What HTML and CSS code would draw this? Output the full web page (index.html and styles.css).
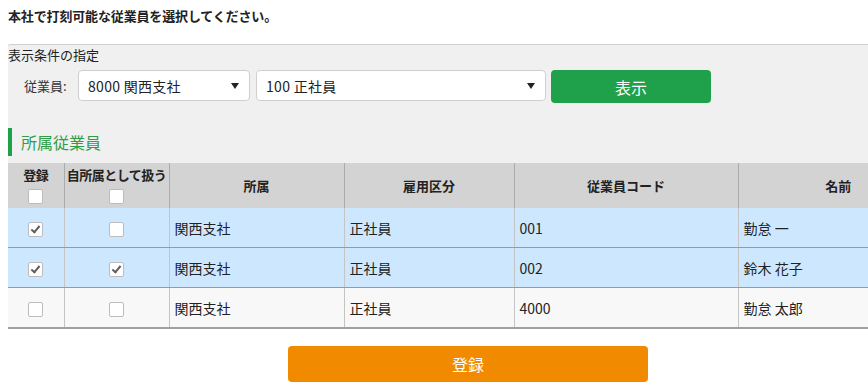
FILE: index.html
```html
<!DOCTYPE html>
<html lang="ja">
<head>
<meta charset="utf-8">
<link rel="stylesheet" href="styles.css">
</head>
<body>
<h1 class="page-title">本社で打刻可能な従業員を選択してください。</h1>
<div class="panel">
  <div class="panel-top">
    <div class="cond-title">表示条件の指定</div>
    <div class="filter-row">
      <span class="filter-label">従業員:</span>
      <div class="select select-office"><span>8000 関西支社</span><span class="arrow"></span></div>
      <div class="select select-type"><span>100 正社員</span><span class="arrow"></span></div>
      <button class="btn btn-show">表示</button>
    </div>
    <div class="section-title">所属従業員</div>
  </div>
  <table class="emp-table">
    <colgroup>
      <col class="c1"><col class="c2"><col class="c3"><col class="c4"><col class="c5"><col class="c6">
    </colgroup>
    <thead>
      <tr>
        <th class="th-check"><div>登録</div><span class="cb"></span></th>
        <th class="th-check"><div>自所属として扱う</div><span class="cb"></span></th>
        <th>所属</th>
        <th>雇用区分</th>
        <th>従業員コード</th>
        <th>名前</th>
      </tr>
    </thead>
    <tbody>
      <tr class="sel">
        <td class="center"><span class="cb checked"></span></td>
        <td class="center"><span class="cb"></span></td>
        <td>関西支社</td><td>正社員</td><td>001</td><td>勤怠 一</td>
      </tr>
      <tr class="sel">
        <td class="center"><span class="cb checked"></span></td>
        <td class="center"><span class="cb checked"></span></td>
        <td>関西支社</td><td>正社員</td><td>002</td><td>鈴木 花子</td>
      </tr>
      <tr class="plain last">
        <td class="center"><span class="cb"></span></td>
        <td class="center"><span class="cb"></span></td>
        <td>関西支社</td><td>正社員</td><td>4000</td><td>勤怠 太郎</td>
      </tr>
    </tbody>
  </table>
  <div class="submit-row">
    <button class="btn btn-submit">登録</button>
  </div>
</div>
</body>
</html>
```
FILE: styles.css
```css
html { overflow: hidden; }
body {
  margin: 8px 0 0 8px;
  font-family: "Noto Sans CJK JP", "Noto Sans", sans-serif;
  color: #222;
  background: #fff;
}
.page-title {
  margin: 0;
  font-size: 13px;
  line-height: 16px;
  font-weight: bold;
  letter-spacing: -0.15px;
}
.panel {
  margin: 20px 0 0 -1px;
  width: 860px;
  height: 346px;
  overflow: hidden;
  border-top: 1px solid #d0d0d0;
  border-left: 1px solid #d0d0d0;
  border-top-left-radius: 4px;
}
.panel-top {
  width: 930px;
  background: #f0f0f0;
  border-top-left-radius: 4px;
  padding-bottom: 7px;
}
.cond-title {
  font-size: 13px;
  line-height: 20px;
}
.filter-row {
  display: flex;
  align-items: flex-start;
  margin-top: 5px;
  padding-left: 16px;
}
.filter-label {
  font-size: 13px;
  color: #333;
  line-height: 31px;
  width: 54px;
}
.select {
  display: flex;
  align-items: center;
  justify-content: space-between;
  box-sizing: border-box;
  height: 31px;
  background: #fff;
  border: 1px solid #cfcfcf;
  border-radius: 4px;
  padding: 0 10px 0 9px;
  font-size: 14px;
  letter-spacing: 0.3px;
  color: #222;
}
.select-office { width: 172px; }
.select-type { width: 290px; margin-left: 6px; }
.arrow {
  width: 0; height: 0;
  border-left: 4px solid transparent;
  border-right: 4px solid transparent;
  border-top: 6px solid #222;
}
.btn {
  border: none;
  color: #fff;
  font-family: inherit;
  cursor: pointer;
}
.btn-show {
  width: 160px;
  height: 33px;
  margin-left: 5px;
  background: #1fa14b;
  border-radius: 4px;
  font-size: 16px;
}
.section-title {
  margin-top: 25px;
  border-left: 4px solid #1fa14b;
  height: 28px;
  line-height: 28px;
  padding-left: 9px;
  font-size: 16px;
  color: #2e9e46;
}
.emp-table {
  width: 930px;
  border-collapse: collapse;
  table-layout: fixed;
  font-size: 13px;
}
.c1 { width: 56px; }
.c2 { width: 105px; }
.c3 { width: 175px; }
.c4 { width: 170px; }
.c5 { width: 224px; }
.emp-table th {
  background: #d3d3d3;
  height: 45px;
  font-weight: bold;
  font-size: 13px;
  padding: 0;
  border-left: 1px solid #ababab;
  color: #222;
}
.emp-table th:first-child,
.emp-table td:first-child { border-left: none; }
.th-check { vertical-align: top; }
.th-check div {
  line-height: 16px;
  margin-top: 4px;
  letter-spacing: -0.5px;
  white-space: nowrap;
}
.th-check .cb { margin-top: 4px; }
.emp-table td {
  height: 39px;
  padding: 0 0 0 5px;
  border-left: 1px solid #c4c4c4;
  border-bottom: 1px solid #9a9a9a;
  font-size: 14px;
}
.emp-table td.center { text-align: center; padding: 0; }
.emp-table tr.last td { border-bottom: 2px solid #a0a0a0; }
.sel td { background: #cde8fe; }
.plain td { background: #f8f8f8; }
.cb {
  display: inline-block;
  box-sizing: border-box;
  width: 15px;
  height: 15px;
  background: #fff;
  border: 1px solid #bcbcbc;
  border-radius: 2px;
  vertical-align: middle;
  position: relative;
}
.cb.checked::after {
  content: "";
  position: absolute;
  left: 4px;
  top: 1px;
  width: 3px;
  height: 7px;
  border-right: 2.5px solid #5e5e5e;
  border-bottom: 2.5px solid #5e5e5e;
  transform: rotate(40deg);
}
.submit-row {
  width: 920px;
  display: flex;
  justify-content: center;
  padding-top: 17px;
}
.btn-submit {
  width: 360px;
  height: 36px;
  background: #f28a00;
  border-radius: 4px;
  font-size: 16px;
}
```
